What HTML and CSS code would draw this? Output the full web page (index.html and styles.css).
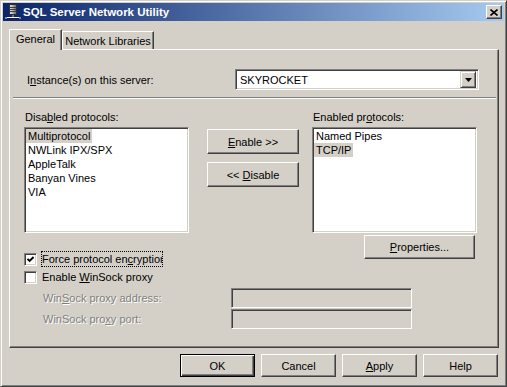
FILE: index.html
```html
<!DOCTYPE html>
<html lang="en">
<head>
    <meta charset="UTF-8">
    <title>SQL Server Network Utility</title>
    <link rel="stylesheet" href="styles.css">
</head>
<body>
<div class="window">
    <div class="titlebar">
        <svg class="app-icon" width="16" height="16" viewBox="0 0 16 16">
            <defs>
                <linearGradient id="tower" x1="0" x2="1" y1="0" y2="0">
                    <stop offset="0" stop-color="#e8e8e8"/>
                    <stop offset="0.5" stop-color="#b0b0b0"/>
                    <stop offset="1" stop-color="#606060"/>
                </linearGradient>
            </defs>
            <rect x="4.5" y="0.5" width="7" height="10" fill="url(#tower)" stroke="#303030"/>
            <line x1="5" y1="3.5" x2="11" y2="3.5" stroke="#404040"/>
            <line x1="5" y1="5.5" x2="11" y2="5.5" stroke="#404040"/>
            <line x1="5" y1="7.5" x2="11" y2="7.5" stroke="#404040"/>
            <line x1="8" y1="11" x2="8" y2="14" stroke="#c0c0c0"/>
            <rect x="1" y="13" width="14" height="1" fill="#ffffff"/>
            <rect x="1" y="14" width="14" height="1" fill="#202020"/>
            <rect x="0" y="13" width="2" height="2" fill="#6c8cd0"/>
            <rect x="14" y="13" width="2" height="2" fill="#6c8cd0"/>
        </svg>
        <span class="title">SQL Server Network Utility</span>
        <button class="close-btn">
            <svg width="8" height="7" viewBox="0 0 8 7">
                <path d="M0.5 0.5 L7.5 6.5 M7.5 0.5 L0.5 6.5" stroke="#000" stroke-width="1.6"/>
            </svg>
        </button>
    </div>

    <div class="tabs">
        <div class="tab active">General</div>
        <div class="tab wide">Network Libraries</div>
    </div>

    <div class="panel">
        <div class="instance-row">
            <label class="instance-label">I<u>n</u>stance(s) on this server:</label>
            <div class="combo">
                <span class="combo-text">SKYROCKET</span>
                <span class="combo-btn">
                    <svg width="7" height="4" viewBox="0 0 7 4"><polygon points="0,0 7,0 3.5,4" fill="#000"/></svg>
                </span>
            </div>
        </div>

        <div class="separator"></div>

        <div class="protocols">
            <div class="field-label">Disa<u>b</u>led protocols:</div>
            <div class="field-label col-right">Enabled pr<u>o</u>tocols:</div>

            <ul class="listbox list-left">
                <li class="selected"><span>Multiprotocol</span></li>
                <li><span>NWLink IPX/SPX</span></li>
                <li><span>AppleTalk</span></li>
                <li><span>Banyan Vines</span></li>
                <li><span>VIA</span></li>
            </ul>

            <div class="move-buttons">
                <button class="btn move-btn"><u>E</u>nable &gt;&gt;</button>
                <button class="btn move-btn">&lt;&lt; <u>D</u>isable</button>
            </div>

            <ul class="listbox list-right">
                <li><span>Named Pipes</span></li>
                <li class="selected"><span>TCP/IP</span></li>
            </ul>

            <div class="check-row check-first">
                <span class="checkbox">
                    <svg width="7" height="7" viewBox="0 0 7 7"><polyline points="0.5,2.8 2.6,5 6.6,1" fill="none" stroke="#000" stroke-width="1.9"/></svg>
                </span>
                <span class="check-label focused">Force protocol en<u>c</u>ryption</span>
            </div>

            <button class="btn props-btn"><u>P</u>roperties...</button>

            <div class="check-row check-second">
                <span class="checkbox"></span>
                <span class="check-label">Enable <u>W</u>inSock proxy</span>
            </div>

            <div class="proxy-row proxy-address">
                <span class="disabled-text">Win<u>S</u>ock proxy address:</span>
                <span class="textfield"></span>
            </div>
            <div class="proxy-row proxy-port">
                <span class="disabled-text">WinSock pro<u>x</u>y port:</span>
                <span class="textfield"></span>
            </div>
        </div>
    </div>

    <div class="footer">
        <button class="btn dlg-btn default">OK</button>
        <button class="btn dlg-btn">Cancel</button>
        <button class="btn dlg-btn"><u>A</u>pply</button>
        <button class="btn dlg-btn">Help</button>
    </div>
</div>
</body>
</html>
```

FILE: styles.css
```css
* {
    box-sizing: border-box;
}
body {
    margin: 0;
    background: #d4d0c8;
    font-family: "Liberation Sans", Arial, sans-serif;
    font-size: 11px;
    color: #000;
}
u {
    text-decoration: underline;
    text-underline-offset: 1px;
}
.window {
    width: 507px;
    height: 387px;
    background: #d4d0c8;
    border: 1px solid;
    border-color: #d4d0c8 #404040 #404040 #d4d0c8;
    box-shadow: inset 1px 1px #fff, inset -1px -1px #808080;
    padding: 2px;
    display: flex;
    flex-direction: column;
}

/* title bar */
.titlebar {
    height: 18px;
    display: flex;
    align-items: center;
    padding: 0 2px;
    background: linear-gradient(to right, #0a246a, #a6caf0);
}
.app-icon {
    display: block;
}
.title {
    margin-left: 2px;
    color: #fff;
    font-weight: bold;
    font-size: 11.5px;
}
.close-btn {
    margin-left: auto;
    width: 16px;
    height: 14px;
    padding: 0;
    display: flex;
    align-items: center;
    justify-content: center;
    background: #d4d0c8;
    border: 1px solid;
    border-color: #fff #404040 #404040 #fff;
    box-shadow: inset -1px -1px #808080;
}
.close-btn svg {
    display: block;
}

/* tabs */
.tabs {
    margin-top: 8px;
    padding-left: 6px;
    height: 20px;
    display: flex;
    align-items: flex-end;
    position: relative;
    z-index: 1;
}
.tab {
    width: 92px;
    height: 18px;
    padding-top: 3px;
    line-height: 13px;
    text-align: center;
    background: #d4d0c8;
    border: 1px solid;
    border-bottom: 0;
    border-color: #fff #404040 transparent #fff;
    box-shadow: inset -1px 0 #808080;
}
.tab.active {
    width: 53px;
    height: 21px;
    margin-bottom: -1px;
}

/* tab panel */
.panel {
    margin: 0 5px 0 6px;
    height: 299px;
    padding-top: 19px;
    border: 1px solid;
    border-color: #fff #404040 #404040 #fff;
    box-shadow: inset -1px -1px #808080;
}
.instance-row {
    display: flex;
    align-items: center;
    padding-left: 17px;
}
.instance-label {
    width: 208px;
}
.combo {
    width: 244px;
    height: 21px;
    display: flex;
    align-items: center;
    justify-content: space-between;
    padding: 2px;
    background: #fff;
    border: 1px solid;
    border-color: #808080 #fff #fff #808080;
    box-shadow: inset 1px 1px #404040, inset -1px -1px #d4d0c8;
}
.combo-text {
    padding-left: 2px;
}
.combo-btn {
    width: 16px;
    height: 17px;
    display: flex;
    align-items: center;
    justify-content: center;
    background: #d4d0c8;
    border: 1px solid;
    border-color: #d4d0c8 #404040 #404040 #d4d0c8;
    box-shadow: inset 1px 1px #fff, inset -1px -1px #808080;
}
.combo-btn svg {
    display: block;
}
.separator {
    margin: 7px 2px 0 3px;
    height: 2px;
    border-top: 1px solid #808080;
    border-bottom: 1px solid #fff;
}

/* protocols */
.protocols {
    margin: 12px 0 0 14px;
    display: grid;
    grid-template-columns: 165px 123px 165px;
    grid-template-rows: 16px 106px auto auto auto auto;
}
.field-label {
    line-height: 13px;
    padding-left: 1px;
}
.col-right {
    grid-column: 3;
}
.listbox {
    margin: 0;
    padding: 1px 0 0 0;
    list-style: none;
    height: 106px;
    overflow: hidden;
    background: #fff;
    border: 1px solid;
    border-color: #808080 #fff #fff #808080;
    box-shadow: inset 1px 1px #404040, inset -1px -1px #d4d0c8;
}
.listbox li {
    line-height: 14px;
    padding-left: 1px;
}
.listbox li span {
    display: inline-block;
    padding: 0 2px;
}
.listbox li.selected span {
    background: #d4d0c8;
}
.list-left {
    grid-column: 1;
    grid-row: 2;
}
.list-right {
    grid-column: 3;
    grid-row: 2;
}
.move-buttons {
    grid-column: 2;
    grid-row: 2;
    display: flex;
    flex-direction: column;
    gap: 8px;
    padding-top: 2px;
    margin-left: 18px;
}
.btn {
    font: inherit;
    color: #000;
    padding: 0;
    background: #d4d0c8;
    border: 1px solid;
    border-color: #fff #404040 #404040 #fff;
    box-shadow: inset -1px -1px #808080;
}
.move-btn {
    width: 92px;
    height: 25px;
}
.props-btn {
    grid-column: 3;
    grid-row: 3;
    justify-self: end;
    align-self: start;
    width: 111px;
    height: 24px;
    margin: 2px 2px 0 0;
}
.check-row {
    display: flex;
    align-items: center;
    height: 16px;
}
.check-first {
    grid-column: 1 / 3;
    grid-row: 3;
    align-self: start;
    margin-top: 18px;
}
.check-second {
    grid-column: 1 / -1;
    grid-row: 4;
    margin-top: 2px;
}
.checkbox {
    width: 13px;
    height: 13px;
    margin-top: 1px;
    display: flex;
    align-items: center;
    justify-content: center;
    background: #fff;
    border: 1px solid;
    border-color: #808080 #fff #fff #808080;
    box-shadow: inset 1px 1px #404040, inset -1px -1px #d4d0c8;
}
.checkbox svg {
    display: block;
}
.check-label {
    margin-left: 4px;
    line-height: 14px;
    border: 1px dotted transparent;
    white-space: nowrap;
}
.check-label.focused {
    width: 122px;
    overflow: hidden;
    border-color: #000;
}
.proxy-row {
    grid-column: 1 / -1;
    display: grid;
    grid-template-columns: 207px 181px;
    align-items: center;
    height: 20px;
}
.proxy-address {
    grid-row: 5;
    margin-top: 3px;
}
.proxy-port {
    grid-row: 6;
    margin-top: 1px;
}
.disabled-text {
    padding-left: 19px;
    color: #808080;
    text-shadow: 1px 1px 0 #fff;
}
.textfield {
    height: 20px;
    background: #d4d0c8;
    border: 1px solid;
    border-color: #808080 #fff #fff #808080;
    box-shadow: inset 1px 1px #404040, inset -1px -1px #d4d0c8;
}

/* dialog buttons */
.footer {
    margin-top: 6px;
    padding-right: 6px;
    display: flex;
    justify-content: flex-end;
    gap: 6px;
}
.dlg-btn {
    width: 75px;
    height: 23px;
}
.dlg-btn.default {
    border-color: #000;
    box-shadow: inset 1px 1px #fff, inset -1px -1px #404040, inset -2px -2px #808080;
}
```
